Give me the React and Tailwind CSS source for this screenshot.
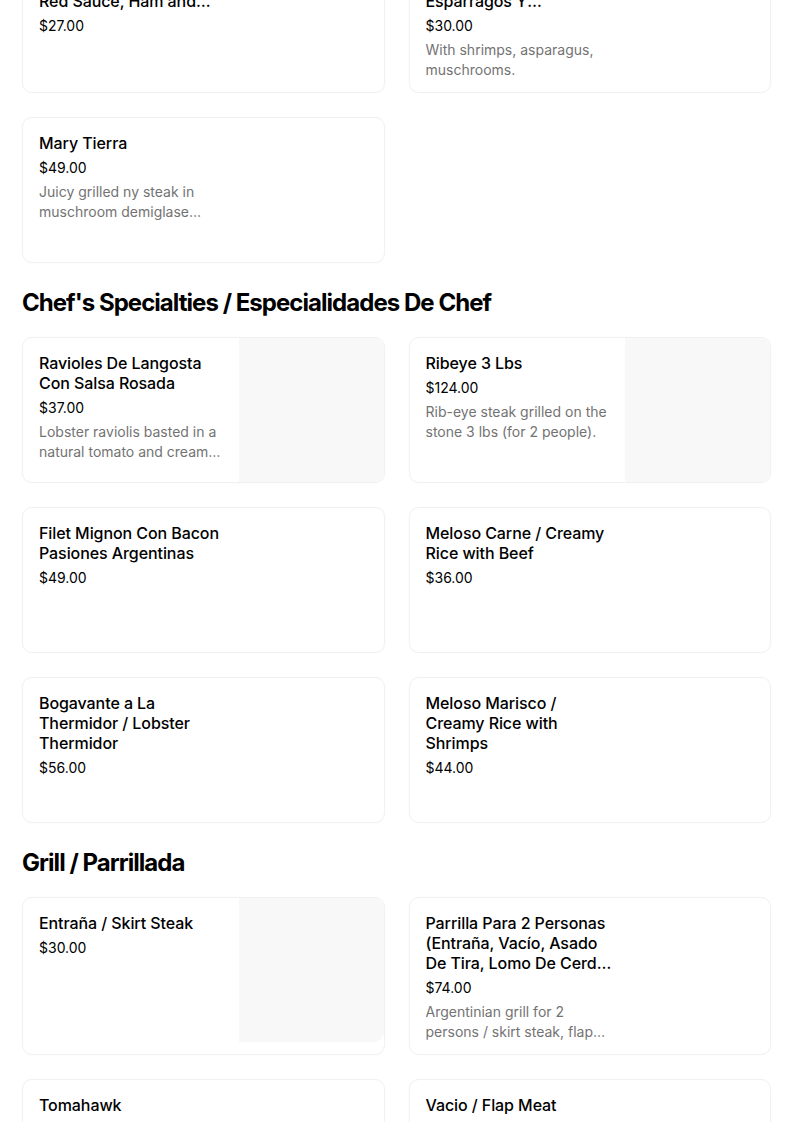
import React from 'react';

const sections = [
  {
    title: null,
    items: [
      {
        name: (
          <>
            Pizza Con Jamón /<br />Pizza With<br />Red Sauce, Ham and Mushrooms
          </>
        ),
        price: '$27.00',
      },
      {
        name: (
          <>
            Pasta Marinera /<br />Camarones Con<br />Esparragos Y Champiñones
          </>
        ),
        price: '$30.00',
        desc: 'With shrimps, asparagus, muschrooms.',
      },
      {
        name: 'Mary Tierra',
        price: '$49.00',
        desc: 'Juicy grilled ny steak in muschroom demiglase sauce and shrimps.',
      },
    ],
  },
  {
    title: "Chef's Specialties / Especialidades De Chef",
    items: [
      {
        name: 'Ravioles De Langosta Con Salsa Rosada',
        price: '$37.00',
        desc: 'Lobster raviolis basted in a natural tomato and cream sauce.',
        image: true,
      },
      {
        name: 'Ribeye 3 Lbs',
        price: '$124.00',
        desc: 'Rib-eye steak grilled on the stone 3 lbs (for 2 people).',
        image: true,
      },
      { name: 'Filet Mignon Con Bacon Pasiones Argentinas', price: '$49.00' },
      { name: 'Meloso Carne / Creamy Rice with Beef', price: '$36.00' },
      { name: 'Bogavante a La Thermidor / Lobster Thermidor', price: '$56.00' },
      { name: 'Meloso Marisco / Creamy Rice with Shrimps', price: '$44.00' },
    ],
  },
  {
    title: 'Grill / Parrillada',
    items: [
      { name: 'Entraña / Skirt Steak', price: '$30.00', image: true },
      {
        name: 'Parrilla Para 2 Personas (Entraña, Vacío, Asado De Tira, Lomo De Cerdo y Chorizo)',
        price: '$74.00',
        desc: 'Argentinian grill for 2 persons / skirt steak, flap meat, short ribs, pork loin.',
      },
      { name: 'Tomahawk', price: '$89.00', desc: 'Tomahawk steak grilled on the stone.' },
      { name: 'Vacio / Flap Meat', price: '$28.00' },
    ],
  },
];

const MenuCard = ({ item }) => (
  <div className="flex min-h-[146px] rounded-[10px] border border-[#f1f1f1] bg-white shadow-[0_0_2px_rgba(0,0,0,0.03)] overflow-hidden">
    <div className="flex-1 min-w-0 pt-[15px] pb-3 pl-4 pr-[10px]">
      <h3 className="text-[16px] leading-5 font-medium tracking-[-0.005em] text-black line-clamp-3">{item.name}</h3>
      <p className="mt-[5px] text-[14px] leading-5 text-black">{item.price}</p>
      {item.desc && (
        <p className="mt-1 text-[14px] leading-5 text-[#737373] line-clamp-2">{item.desc}</p>
      )}
    </div>
    <div className={`w-[145px] h-[144px] shrink-0 rounded-r-[10px] ${item.image ? 'bg-[#f8f8f8]' : ''}`} />
  </div>
);

export default function App() {
  return (
    <div className="bg-white min-h-screen overflow-hidden" style={{ fontFamily: 'Inter, "Liberation Sans", sans-serif' }}>
      <div className="mt-[-65px] pl-[22px] pr-[33px]">
        {sections.map((section, i) => (
          <section key={i}>
            {section.title && (
              <h2 className="pt-6 pb-[18px] text-[24px] leading-8 font-bold tracking-[-0.04em] text-black">
                {section.title}
              </h2>
            )}
            <div className="grid grid-cols-2 gap-6">
              {section.items.map((item, j) => (
                <MenuCard key={j} item={item} />
              ))}
            </div>
          </section>
        ))}
      </div>
    </div>
  );
}
